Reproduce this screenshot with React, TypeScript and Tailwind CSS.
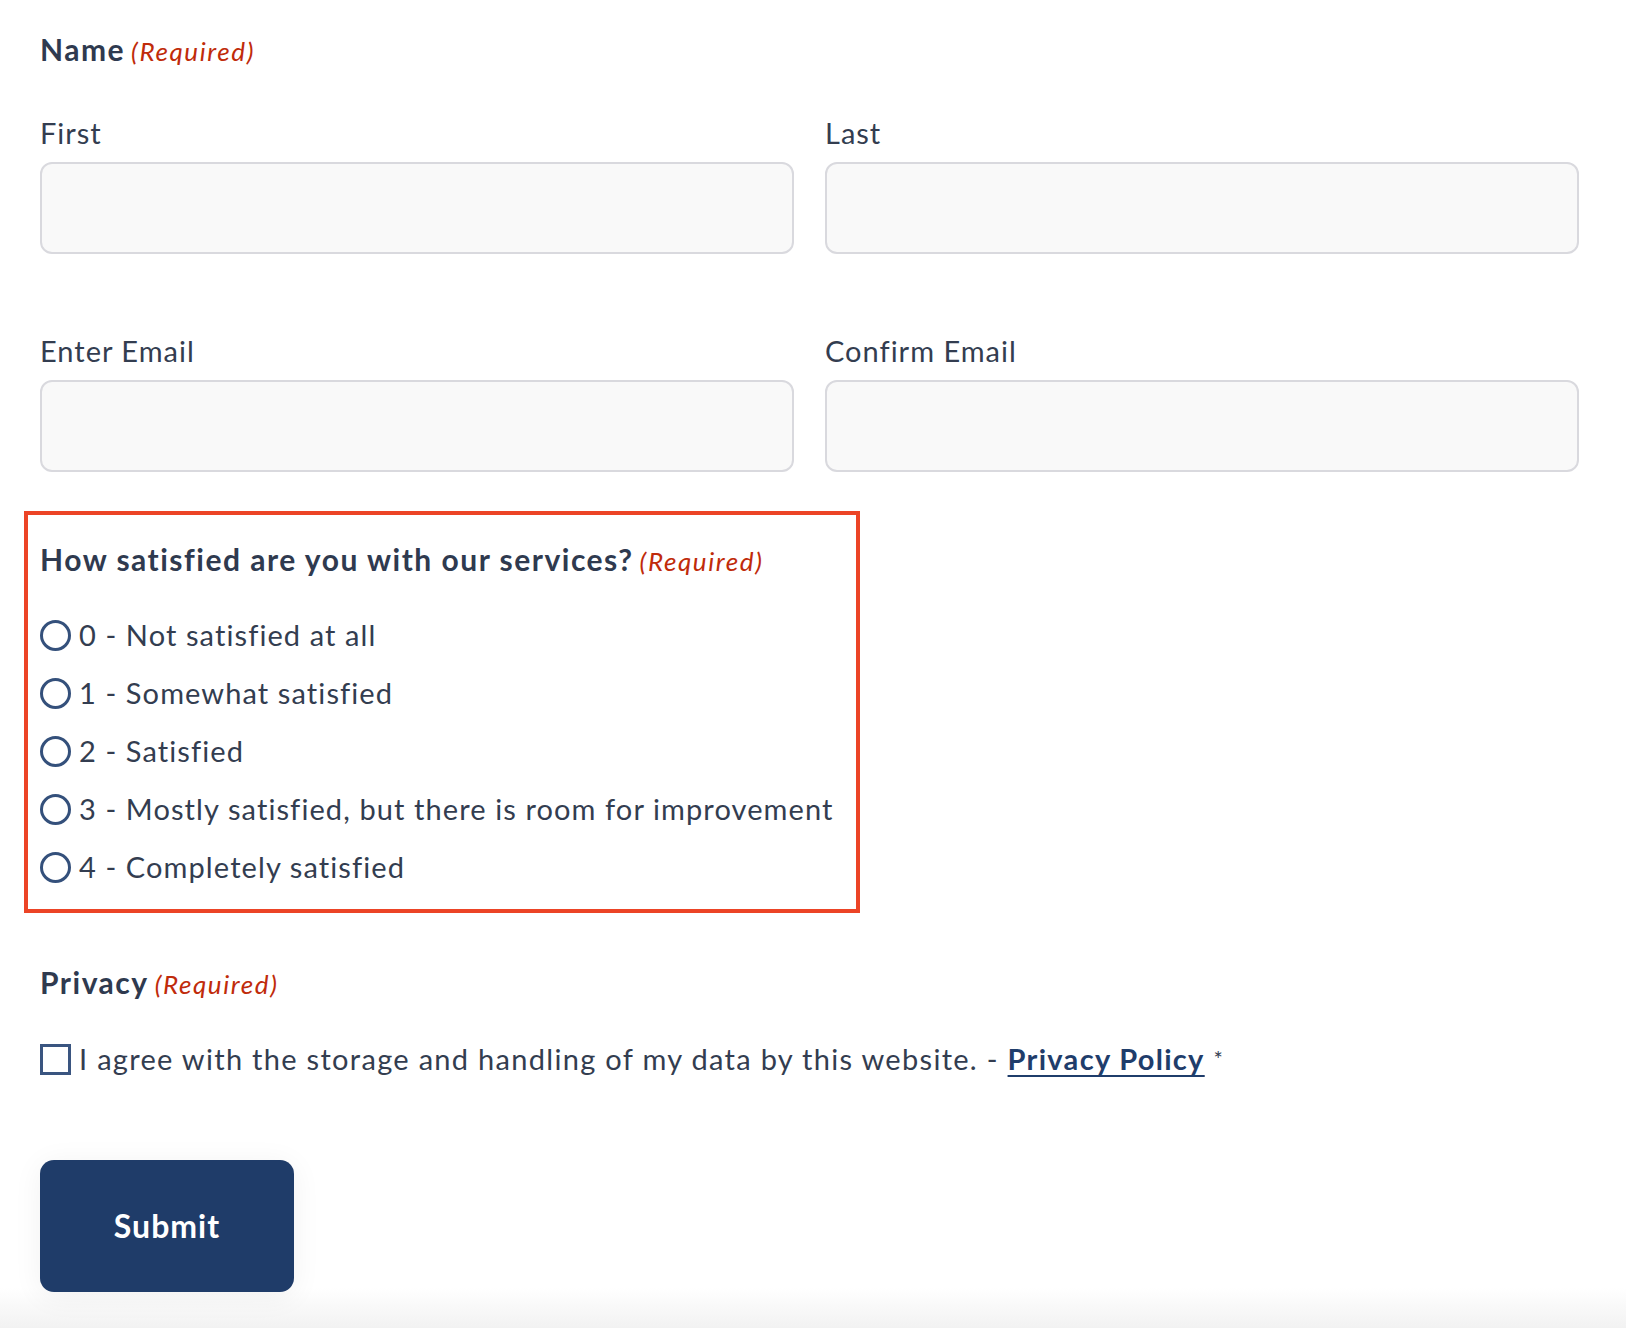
import React from "react";

const font = { fontFamily: "Lato, 'Noto Sans', sans-serif" };

function Req() {
  return (
    <span className="ml-[6px] text-[26px] font-normal italic tracking-[1.6px] text-[#c02b0a]">(Required)</span>
  );
}

function Field({ label }: { label: string }) {
  return (
    <div className="flex flex-col">
      <label className="text-[29px] leading-[36px] tracking-[1px] text-[#333d50]">{label}</label>
      <input
        type="text"
        className="mt-[11px] h-[92px] w-full rounded-[12px] border-2 border-[#d9d9de] bg-[#f9f9f9] outline-none"
      />
    </div>
  );
}

const options = [
  "0 - Not satisfied at all",
  "1 - Somewhat satisfied",
  "2 - Satisfied",
  "3 - Mostly satisfied, but there is room for improvement",
  "4 - Completely satisfied",
];

export default function App() {
  return (
    <div className="relative h-[1328px] w-[1626px] overflow-hidden bg-white" style={font}>
      <div className="absolute bottom-0 left-0 h-[40px] w-full bg-gradient-to-b from-white to-[#f2f2f2]" />
      <div className="relative w-[1579px] pl-[40px] pt-[31px]">
        <div className="text-[30px] font-bold leading-[36px] tracking-[1.5px] text-[#2f3a4f]">
          Name<Req />
        </div>
        <div className="mt-[46px] grid grid-cols-2 gap-x-[31px]">
          <Field label="First" />
          <Field label="Last" />
        </div>
        <div className="mt-[79px] grid grid-cols-2 gap-x-[31px]">
          <Field label="Enter Email" />
          <Field label="Confirm Email" />
        </div>
      </div>

      <div className="relative ml-[24px] mt-[39px] w-[836px] border-4 border-[#ec4426] pb-[24px] pl-[12px] pt-[26px]">
        <div className="text-[30px] font-bold leading-[36px] tracking-[1.5px] text-[#2f3a4f]">
          How satisfied are you with our services?<Req />
        </div>
        <div className="mt-[38px] flex flex-col gap-[22px]">
          {options.map((o) => (
            <div key={o} className="flex items-center text-[29px] leading-[36px] tracking-[1.1px] text-[#333d50]">
              <span className="h-[31px] w-[31px] shrink-0 rounded-full border-[3.5px] border-[#34507b]" />
              <span className="ml-[8px]">{o}</span>
            </div>
          ))}
        </div>
      </div>

      <div className="relative pl-[40px]">
        <div className="mt-[51px] text-[30px] font-bold leading-[36px] tracking-[1.5px] text-[#2f3a4f]">
          Privacy<Req />
        </div>
        <div className="mt-[39px] flex items-center text-[29px] leading-[36px] tracking-[1.3px] text-[#333d50]">
          <span className="h-[31px] w-[31px] shrink-0 border-[3px] border-[#3a5580]" />
          <span className="ml-[8px]">
            I agree with the storage and handling of my data by this website. -{" "}
            <a
              className="font-bold text-[#1f3d6b] underline decoration-2 underline-offset-[5px]"
              href="#"
            >
              Privacy Policy
            </a>{" "}
            <span className="align-top text-[22px]">*</span>
          </span>
        </div>
        <button className="mt-[83px] h-[132px] w-[254px] rounded-[14px] bg-[#1f3c69] text-[32px] font-bold tracking-[1px] text-white shadow-[0_4px_30px_rgba(0,0,0,0.06)]">
          Submit
        </button>
      </div>
    </div>
  );
}
